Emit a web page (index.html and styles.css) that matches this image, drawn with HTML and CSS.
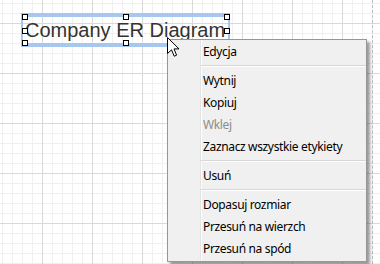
FILE: index.html
```html
<!DOCTYPE html>
<html lang="pl">
<head>
    <meta charset="UTF-8">
    <title>Company ER Diagram</title>
    <link rel="stylesheet" href="styles.css">
</head>
<body>
    <div class="canvas">
        <div class="page-edge"></div>

        <div class="node selected">
            <span class="node-title">Company ER Diagram</span>
        </div>
        <span class="handle h-tl"></span>
        <span class="handle h-tm"></span>
        <span class="handle h-tr"></span>
        <span class="handle h-ml"></span>
        <span class="handle h-mr"></span>
        <span class="handle h-bl"></span>
        <span class="handle h-bm"></span>
        <span class="handle h-br"></span>

        <ul class="context-menu">
            <li class="item">Edycja</li>
            <li class="sep"></li>
            <li class="item">Wytnij</li>
            <li class="item">Kopiuj</li>
            <li class="item disabled">Wklej</li>
            <li class="item">Zaznacz wszystkie etykiety</li>
            <li class="sep"></li>
            <li class="item">Usuń</li>
            <li class="sep"></li>
            <li class="item">Dopasuj rozmiar</li>
            <li class="item">Przesuń na wierzch</li>
            <li class="item">Przesuń na spód</li>
        </ul>

        <svg class="cursor" width="13" height="21" viewBox="0 0 13 21">
            <path d="M0.5 0.5 L0.5 16.5 L4.5 12.8 L7.2 19.2 L9.6 18.2 L7 11.9 L12 11.9 Z" fill="#fff" stroke="#000" stroke-width="1" stroke-linejoin="miter"/>
        </svg>
    </div>
</body>
</html>
```

FILE: styles.css
```css
body {
    margin: 0;
    font-family: "Liberation Sans", Arial, sans-serif;
}
.canvas {
    position: relative;
    width: 380px;
    height: 264px;
    overflow: hidden;
    background-color: #fff;
    background-image:
        linear-gradient(to right, #d9d9d9 1px, transparent 1px),
        linear-gradient(to bottom, #d9d9d9 1px, transparent 1px),
        linear-gradient(to right, #f0f0f0 1px, transparent 1px),
        linear-gradient(to bottom, #f0f0f0 1px, transparent 1px);
    background-size: 50px 50px, 50px 50px, 10px 10px, 10px 10px;
    background-position: 42px 0, 0 23px, 2px 0, 0 3px;
}
.page-edge {
    position: absolute;
    left: 372px;
    top: 0;
    height: 264px;
    border-left: 1px dashed #bdbdbd;
}

/* selected diagram label */
.node {
    position: absolute;
    left: 21px;
    top: 13px;
    width: 205px;
    height: 26px;
    border-top: 4px solid #a6c8f0;
    border-bottom: 4px solid #a6c8f0;
    border-left: 2px solid #a6c8f0;
    border-right: 2px solid #a6c8f0;
}
.node-title {
    display: block;
    padding: 3px 0 0 2px;
    font-size: 20px;
    line-height: 20px;
    color: #333;
    white-space: nowrap;
}
.handle {
    position: absolute;
    width: 4px;
    height: 4px;
    background: #fff;
    border: 1px solid #000;
}
.h-tl { left: 22px; top: 14px; }
.h-tm { left: 123px; top: 14px; }
.h-tr { left: 224px; top: 14px; }
.h-ml { left: 22px; top: 28px; }
.h-mr { left: 224px; top: 28px; }
.h-bl { left: 22px; top: 40px; }
.h-bm { left: 123px; top: 40px; }
.h-br { left: 224px; top: 40px; }

/* context menu */
.context-menu {
    position: absolute;
    left: 167px;
    top: 39px;
    width: 198px;
    margin: 0;
    padding: 1px 0;
    list-style: none;
    background: #f0f0f0 linear-gradient(to right, transparent 32px, #e2e3e3 32px, #e2e3e3 33px, #fff 33px, #fff 34px, transparent 34px);
    border: 1px solid #979797;
    box-shadow: 3px 3px 3px rgba(0, 0, 0, 0.4);
    font-family: "Noto Sans", "Open Sans", sans-serif;
    font-size: 12px;
    letter-spacing: -0.35px;
    color: #000;
}
.item {
    height: 22px;
    line-height: 22px;
    padding-left: 35px;
    white-space: nowrap;
}
.item.disabled {
    color: #8d8d8d;
}
.sep {
    height: 1px;
    margin: 2px 0 3px 33px;
    background: #d7d7d7;
    border-bottom: 1px solid #fff;
}

.cursor {
    position: absolute;
    left: 167px;
    top: 37px;
}
```
